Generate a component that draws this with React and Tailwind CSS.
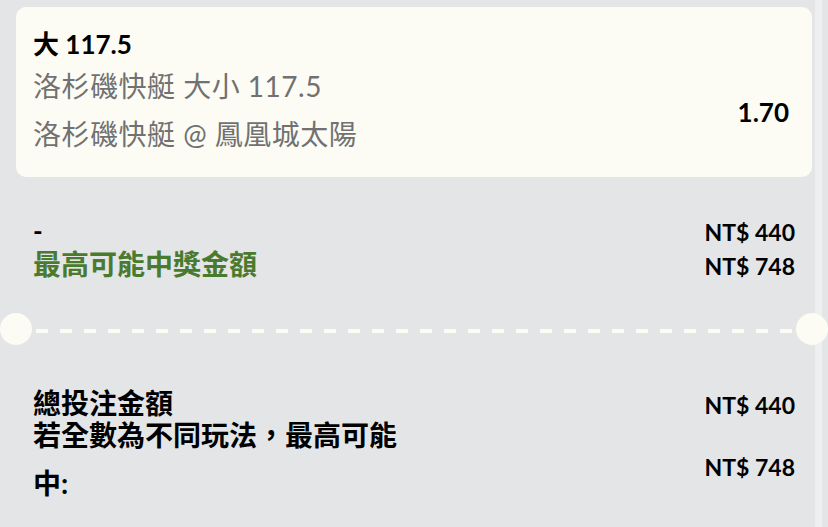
export default function App() {
  const font = { fontFamily: 'Lato, "Noto Sans CJK TC", sans-serif' };
  return (
    <div
      className="relative w-[828px] h-[527px] overflow-hidden bg-[#e4e5e7] text-black"
      style={font}
    >
      <div className="absolute top-0 bottom-0 left-[815px] w-[7px] bg-[#eeeff0]" />
      <div className="relative px-4 pt-[7px]">
        {/* Bet card */}
        <div className="flex items-center justify-between rounded-[10px] bg-[#fcfcf5] pl-[17px] pr-[23px] pt-[20px] pb-[19px]">
          <div className="flex flex-col">
            <div className="text-[26px] font-bold leading-[35px]">大 117.5</div>
            <div className="text-[28px] leading-[48px] tracking-[0.5px] text-[#717171]">洛杉磯快艇 大小 117.5</div>
            <div className="text-[28px] leading-[48px] tracking-[0.5px] text-[#717171]">洛杉磯快艇 @ 鳳凰城太陽</div>
          </div>
          <div className="mt-[38px] text-[26px] font-bold leading-[32px]">1.70</div>
        </div>

        {/* Summary */}
        <div className="mt-[38px] px-[17px]">
          <div className="flex items-baseline justify-between leading-[32px]">
            <span className="text-[26px] font-bold">-</span>
            <span className="text-[23px] font-bold">NT$ 440</span>
          </div>
          <div className="flex items-baseline justify-between leading-[32px]">
            <span className="text-[28px] font-bold text-[#4a7a2e]">最高可能中獎金額</span>
            <span className="text-[23px] font-bold">NT$ 748</span>
          </div>
        </div>

        {/* Divider */}
        <div className="relative mt-[31px] h-[32px]">
          <div className="absolute left-[-16px] top-0 h-[32px] w-[32px] rounded-full bg-[#fcfcf5]" />
          <div className="absolute right-[-16px] top-0 h-[32px] w-[32px] rounded-full bg-[#fcfcf5]" />
          <div className="absolute left-[20px] right-[20px] top-[16px] h-[4px] bg-[repeating-linear-gradient(90deg,#fcfcf5_0_12px,transparent_12px_24px)]" />
        </div>

        {/* Totals */}
        <div className="mt-[42px] px-[17px]">
          <div className="flex items-baseline justify-between leading-[32px]">
            <span className="text-[28px] font-bold">總投注金額</span>
            <span className="text-[23px] font-bold">NT$ 440</span>
          </div>
          <div className="mt-[-10px] flex items-center justify-between">
            <span className="w-[370px] text-[28px] font-bold leading-[48px]">若全數為不同玩法，最高可能中:</span>
            <span className="mt-[16px] text-[23px] font-bold leading-[32px]">NT$ 748</span>
          </div>
        </div>
      </div>
    </div>
  );
}
